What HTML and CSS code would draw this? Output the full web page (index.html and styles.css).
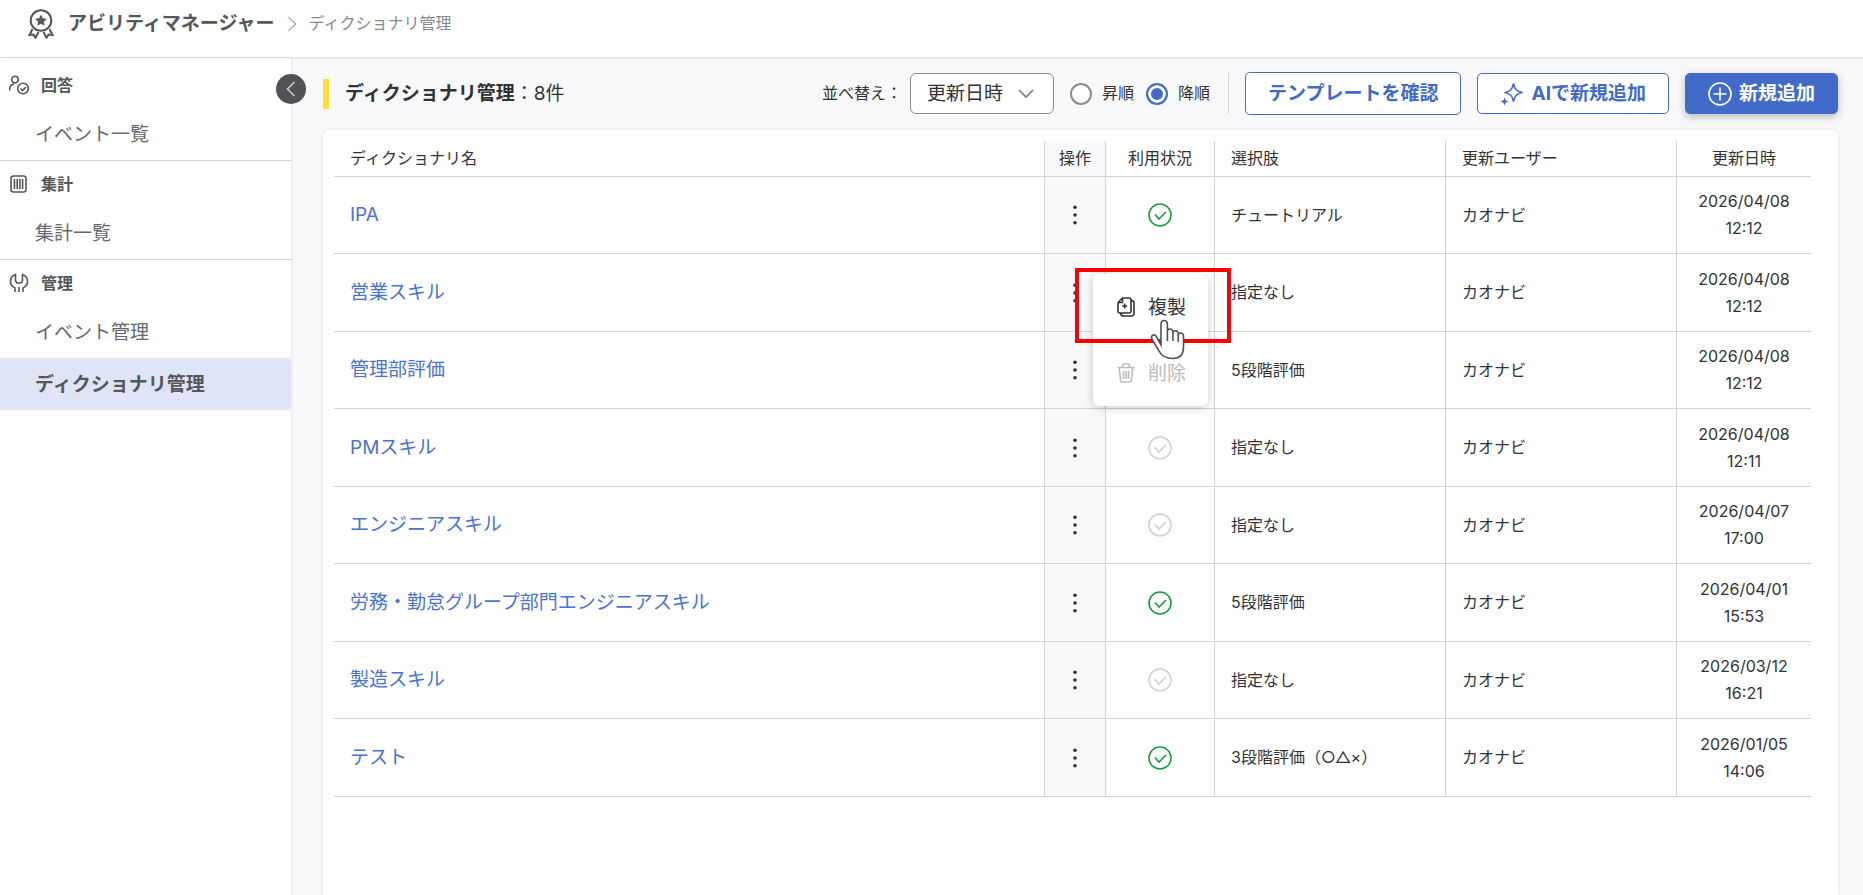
FILE: index.html
```html
<!DOCTYPE html>
<html lang="ja">
    <head>
        <meta charset="utf-8">
        <title>ディクショナリ管理</title>
        <meta name="viewport" content="width=device-width, initial-scale=1">
        <link rel="stylesheet" href="styles.css">
    </head>
    <body>
        <svg class="defs" aria-hidden="true">
            <symbol id="check" viewBox="0 0 24 24"><circle cx="12" cy="12" r="11"/><path d="M7 11.5l4 4.5 7-7"/></symbol>
            <symbol id="dots" viewBox="0 0 6 20"><circle cx="3" cy="2.3" r="1.8"/><circle cx="3" cy="10" r="1.8"/><circle cx="3" cy="17.7" r="1.8"/></symbol>
        </svg>
        <header class="header">
            <svg class="logo" viewBox="0 0 26 30">
                <circle cx="13" cy="11.5" r="10.3"/>
                <path class="fill" d="M13 5.5l1.8 3.7 4.1.6-3 2.900.7 4-3.600-1.900-3.600 1.900.7-4-3-2.900 4.100-.6z"/>
                <path d="M4.500 20L1.500 26l4-.4 2 3.200L10.500 23M21.500 20l3 6-4-.4-2 3.200L15.500 23"/>
            </svg>
            <a class="app-name" href="#">アビリティマネージャー</a>
            <svg class="crumb-arrow" viewBox="0 0 10 16"><path d="M1.500 1l7 7-7 7"/></svg>
            <span class="crumb">ディクショナリ管理</span>
        </header>
        <div class="layout">
            <nav class="sidebar">
                <button class="collapse" type="button" aria-label="メニューを閉じる">
                    <svg viewBox="0 0 10 16"><path d="M8.500 1l-7 7 7 7"/></svg>
                </button>
                <div class="group">
                    <div class="group-name">
                        <svg viewBox="0 0 20 20"><circle cx="6" cy="4.500" r="3.300"/><path d="M.7 15.500V14c0-3 2-4.500 4.500-5"/><circle cx="14" cy="13.500" r="5.300"/><path d="M11.500 13.500l2 2 3.500-3.500"/></svg>
                        回答
                    </div>
                    <a class="menu-link" href="#">イベント一覧</a>
                </div>
                <div class="group">
                    <div class="group-name">
                        <svg viewBox="0 0 20 20"><rect x="2" y="2" width="15" height="16" rx="2.500"/><path d="M5.500 5v10M8.200 5v10M10.900 5v10M13.600 5v10"/></svg>
                        集計
                    </div>
                    <a class="menu-link" href="#">集計一覧</a>
                </div>
                <div class="group">
                    <div class="group-name">
                        <svg viewBox="0 0 20 20"><path d="M6 19v-4c-3-1.500-4.500-3.500-4.500-6.500 0-3.500 2-6 5-7V8L8 10h4l1.500-2V1.500c3 1 5 3.500 5 7 0 3-1.500 5-4.500 6.500v4M10 14v5"/></svg>
                        管理
                    </div>
                    <a class="menu-link" href="#">イベント管理</a>
                    <a class="menu-link active" href="#">ディクショナリ管理</a>
                </div>
            </nav>
            <main class="main">
                <div class="toolbar">
                    <h1 class="title">ディクショナリ管理<span class="count">：8件</span></h1>
                    <label class="sort-label" for="sort">並べ替え：</label>
                    <div class="select">
                        <select id="sort"><option>更新日時</option></select>
                        <svg viewBox="0 0 16 10"><path d="M1 1l7 7 7-7"/></svg>
                    </div>
                    <div class="orders">
                        <label class="order"><input type="radio" name="order">昇順</label>
                        <label class="order"><input type="radio" name="order" checked>降順</label>
                    </div>
                    <div class="buttons">
                        <button class="btn tall" type="button">テンプレートを確認</button>
                        <button class="btn" type="button">
                            <svg viewBox="0 0 24 24"><path d="M13.500 1.500c1.200 6 3 7.800 9 9-6 1.200-7.800 3-9 9-1.200-6-3-7.800-9-9 6-1.200 7.800-3 9-9z"/><path class="fill" d="M4.500 15c.6 3.200 1.300 3.900 4.500 4.500-3.200.6-3.900 1.300-4.500 4.500-.6-3.200-1.300-3.900-4.500-4.500 3.200-.6 3.900-1.300 4.500-4.500z"/></svg>
                            AIで新規追加
                        </button>
                        <button class="btn primary" type="button">
                            <svg viewBox="0 0 24 24"><circle cx="12" cy="12" r="11"/><path d="M12 5.500v13M5.500 12h13"/></svg>
                            新規追加
                        </button>
                    </div>
                </div>
                <div class="card">
                    <table class="table">
                        <thead>
                            <tr>
                                <th class="col-name">ディクショナリ名</th>
                                <th class="col-action">操作</th>
                                <th class="col-status">利用状況</th>
                                <th class="col-choice">選択肢</th>
                                <th class="col-user">更新ユーザー</th>
                                <th class="col-date">更新日時</th>
                            </tr>
                        </thead>
                        <tbody>
                            <tr>
                                <td><a class="link" href="#">IPA</a></td>
                                <td class="col-action"><button class="more" type="button" aria-label="操作"><svg><use href="#dots"/></svg></button></td>
                                <td class="col-status"><svg class="check on"><use href="#check"/></svg></td>
                                <td>チュートリアル</td>
                                <td>カオナビ</td>
                                <td class="col-date">2026/04/08<br>12:12</td>
                            </tr>
                            <tr>
                                <td><a class="link" href="#">営業スキル</a></td>
                                <td class="col-action">
                                    <button class="more" type="button" aria-label="操作"><svg><use href="#dots"/></svg></button>
                                    <div class="popup">
                                        <button class="popup-item" type="button">
                                            <svg viewBox="0 0 20 20"><path d="M6.500 1H13q2 0 2 2v11q0 2-2 2H4q-2 0-2-2V5.500zM6.500 1v4.500H2"/><path d="M15 3.500q3 0 3 2.500v10q0 3-3 3H7.500q-2.500 0-3-3"/><path d="M8.700 6.500v5M6.200 9h5"/></svg>
                                            複製
                                        </button>
                                        <button class="popup-item" type="button" disabled>
                                            <svg viewBox="0 0 20 20"><path d="M1.500 4.500h17M6.500 4.500V3q0-2 2-2h3q2 0 2 2v1.500M3.300 5l1.200 12q.2 2 2 2h7q1.800 0 2-2L16.700 5M7.500 8v8M10 8v8M12.500 8v8"/></svg>
                                            削除
                                        </button>
                                    </div>
                                    <div class="frame"></div>
                                    <svg class="pointer" viewBox="0 0 36 42"><path d="M11 26V5.500q0-4 3.200-4t3.200 4V17v-4q0-3 2.600-3t2.900 3v5-3.500q0-2.700 2.500-2.700t2.800 2.700V19v-2.500q0-2.500 2.500-2.500t2.800 2.800V28c0 7.500-4 11.500-10.500 11.500C15 39.500 11.500 37 9 32L2 20c-1.500-3 1.500-5.500 4-3z"/><path d="M17.400 17v5M22.900 18v4M28.200 19v4"/></svg>
                                </td>
                                <td class="col-status"><svg class="check"><use href="#check"/></svg></td>
                                <td>指定なし</td>
                                <td>カオナビ</td>
                                <td class="col-date">2026/04/08<br>12:12</td>
                            </tr>
                            <tr>
                                <td><a class="link" href="#">管理部評価</a></td>
                                <td class="col-action"><button class="more" type="button" aria-label="操作"><svg><use href="#dots"/></svg></button></td>
                                <td class="col-status"><svg class="check"><use href="#check"/></svg></td>
                                <td>5段階評価</td>
                                <td>カオナビ</td>
                                <td class="col-date">2026/04/08<br>12:12</td>
                            </tr>
                            <tr>
                                <td><a class="link" href="#">PMスキル</a></td>
                                <td class="col-action"><button class="more" type="button" aria-label="操作"><svg><use href="#dots"/></svg></button></td>
                                <td class="col-status"><svg class="check"><use href="#check"/></svg></td>
                                <td>指定なし</td>
                                <td>カオナビ</td>
                                <td class="col-date">2026/04/08<br>12:11</td>
                            </tr>
                            <tr>
                                <td><a class="link" href="#">エンジニアスキル</a></td>
                                <td class="col-action"><button class="more" type="button" aria-label="操作"><svg><use href="#dots"/></svg></button></td>
                                <td class="col-status"><svg class="check"><use href="#check"/></svg></td>
                                <td>指定なし</td>
                                <td>カオナビ</td>
                                <td class="col-date">2026/04/07<br>17:00</td>
                            </tr>
                            <tr>
                                <td><a class="link" href="#">労務・勤怠グループ部門エンジニアスキル</a></td>
                                <td class="col-action"><button class="more" type="button" aria-label="操作"><svg><use href="#dots"/></svg></button></td>
                                <td class="col-status"><svg class="check on"><use href="#check"/></svg></td>
                                <td>5段階評価</td>
                                <td>カオナビ</td>
                                <td class="col-date">2026/04/01<br>15:53</td>
                            </tr>
                            <tr>
                                <td><a class="link" href="#">製造スキル</a></td>
                                <td class="col-action"><button class="more" type="button" aria-label="操作"><svg><use href="#dots"/></svg></button></td>
                                <td class="col-status"><svg class="check"><use href="#check"/></svg></td>
                                <td>指定なし</td>
                                <td>カオナビ</td>
                                <td class="col-date">2026/03/12<br>16:21</td>
                            </tr>
                            <tr>
                                <td><a class="link" href="#">テスト</a></td>
                                <td class="col-action"><button class="more" type="button" aria-label="操作"><svg><use href="#dots"/></svg></button></td>
                                <td class="col-status"><svg class="check on"><use href="#check"/></svg></td>
                                <td>3段階評価（○△×）</td>
                                <td>カオナビ</td>
                                <td class="col-date">2026/01/05<br>14:06</td>
                            </tr>
                        </tbody>
                    </table>
                </div>
            </main>
        </div>
    </body>
</html>
```
FILE: styles.css
```css
* {margin: 0;padding: 0;box-sizing: border-box;}
body {display: flex;flex-direction: column;min-height: 100vh;font: 16px/27px Inter, "Noto Sans CJK JP", sans-serif;color: #303236;background-color: #f9f9fc;}
button, select, input {font: inherit;color: inherit;}
button {cursor: pointer;}
a {color: inherit;text-decoration: none;}
svg {display: block;flex: none;fill: none;stroke: currentColor;stroke-width: 1.6;}
.fill {fill: currentColor;stroke: none;}
.defs {position: absolute;width: 0;height: 0;}

.header {display: flex;align-items: center;height: 58px;padding: 0 28px 10px;background-color: #fff;border-bottom: 1px solid #e4e4e6;box-shadow: 0 1px 3px rgba(0,0,0,.08);position: relative;color: #55575c;}
.logo {width: 26px;height: 30px;margin-right: 14px;stroke-width: 2;}
.app-name {font-size: 19px;font-weight: bold;}
.crumb-arrow {width: 10px;height: 16px;margin: 0 12px;color: #b5b5b8;}
.crumb {color: #88898d;}

.layout {display: flex;flex: 1;}
.sidebar {position: relative;flex: none;width: 291px;padding-top: 4px;background-color: #fff;box-shadow: 1px 0 3px rgba(0,0,0,.08);color: #55575c;}
.collapse {position: absolute;top: 16px;right: -15px;display: flex;align-items: center;justify-content: center;width: 30px;height: 30px;border: 0;border-radius: 50%;background-color: #505257;color: #ccc;}
.collapse svg {width: 10px;height: 16px;}
.group {border-bottom: 1px solid #d3d3d6;}
.group:last-child {border-bottom: 0;}
.group-name {display: flex;align-items: center;gap: 12px;height: 46px;padding-left: 9px;font-weight: bold;}
.group-name svg {width: 20px;height: 20px;}
.menu-link {display: flex;align-items: center;height: 52px;padding-left: 35px;font-size: 19px;color: #66686d;}
.menu-link.active {background-color: #dfe5f6;font-weight: bold;color: #55575c;}

.main {display: flex;flex-direction: column;flex: 1;min-width: 0;padding: 14px 25px 0 32px;}
.toolbar {display: flex;align-items: center;height: 43px;white-space: nowrap;}
.title {display: flex;align-items: center;height: 30px;margin-right: auto;padding-left: 16px;border-left: 6px solid #ffdb3a;font-size: 19px;}
.count {font-weight: normal;}
.sort-label {margin-right: 8px;}
.select {position: relative;}
.select select {width: 144px;height: 41px;padding: 0 16px;border: 1px solid #8b8c90;border-radius: 6px;background-color: #fff;font-size: 19px;appearance: none;}
.select svg {position: absolute;top: 16px;right: 20px;width: 16px;height: 10px;color: #77797d;pointer-events: none;}
.orders {display: flex;align-items: center;gap: 12px;height: 41px;margin-left: 16px;padding-right: 18px;border-right: 1px solid #d3d3d6;}
.order {display: flex;align-items: center;gap: 10px;}
.order input {appearance: none;width: 22px;height: 22px;border: 2px solid #8b8c90;border-radius: 50%;background-color: #fff;}
.order input:checked {border-color: #426bc9;background-color: #426bc9;box-shadow: inset 0 0 0 3px #fff;}
.buttons {display: flex;align-items: center;gap: 16px;margin-left: 16px;}
.btn {display: flex;align-items: center;gap: 7px;height: 41px;padding: 0 22px;border: 1px solid #426bc9;border-radius: 5px;background-color: #fff;color: #426bc9;font-size: 19px;font-weight: bold;}
.btn svg {width: 24px;height: 24px;}
.btn.tall {height: 43px;}
.btn.primary {background-color: #426bc9;color: #fff;box-shadow: 0 3px 8px rgba(0,0,0,.25);}

.card {flex: 1;margin-top: 15px;padding: 11px 27px 0 11px;border-radius: 6px 6px 0 0;background-color: #fff;box-shadow: 0 0 4px rgba(0,0,0,.1);}
.table {width: 100%;table-layout: fixed;border-collapse: separate;border-spacing: 0;}
.table th, .table td {padding: 0 16px;border-left: 1px solid #d3d3d6;border-bottom: 1px solid #d3d3d6;text-align: left;font-weight: normal;}
.table th:first-child, .table td:first-child {border-left: 0;}
.table th {height: 36px;}
.table td {height: 77px;}
.table tr:nth-child(even) td {height: 78px;}
.table .col-action {position: relative;width: 61px;padding: 0;background-color: #f9f9fc;text-align: center;}
.table .col-status {width: 109px;padding: 0;text-align: center;}
.table .col-choice, .table .col-user {width: 231px;}
.table .col-date {width: 135px;padding: 0;text-align: center;}
.link {font-size: 19px;color: #4a72d2;}
.more {display: block;width: 30px;height: 30px;margin: 0 auto;border: 0;background: none;}
.more svg {width: 6px;height: 20px;margin: 0 auto;fill: currentColor;stroke: none;}
.check {width: 24px;height: 24px;margin: 0 auto;color: #d0d0d2;}
.check.on {color: #1a9c43;}

.popup {position: absolute;z-index: 1;top: 20px;left: 48px;width: 115px;border-radius: 6px;background-color: #fff;box-shadow: 0 2px 10px rgba(0,0,0,.2);}
.popup-item {display: flex;align-items: center;gap: 12px;width: 100%;height: 66px;padding-left: 23px;border: 0;background: none;font-size: 19px;white-space: nowrap;}
.popup-item svg {width: 20px;height: 20px;}
.popup-item:disabled {color: #bcbcbf;cursor: default;}
.frame {position: absolute;z-index: 2;top: 14px;left: 30px;width: 156px;height: 75px;border: 4px solid #f00;pointer-events: none;}
.pointer {position: absolute;z-index: 3;top: 65px;left: 105px;width: 36px;height: 42px;fill: #fff;color: #505257;pointer-events: none;}
```
